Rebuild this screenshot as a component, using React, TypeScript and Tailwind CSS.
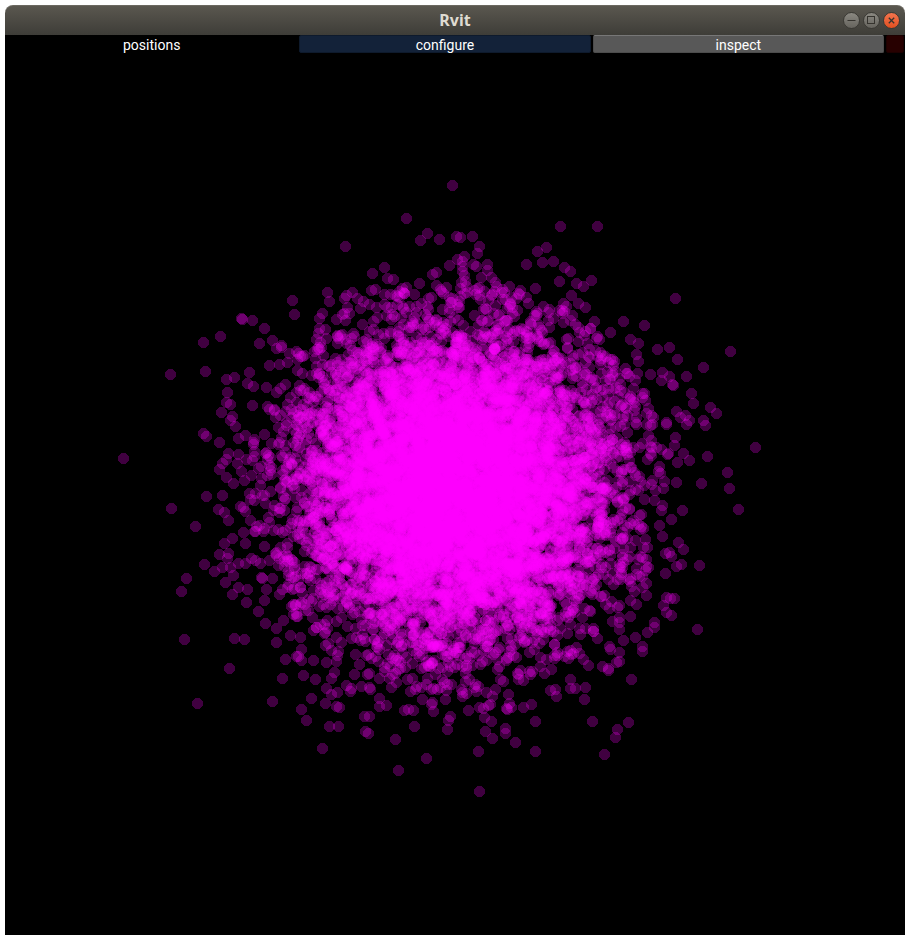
import type { ReactNode } from "react";

type Point = [number, number];

const CENTER_X = 457;
const CENTER_Y = 487;
const SPREAD = 81;
const SAMPLES = 10500;
const CORE_RADIUS = 208;

// Sparse points on the rim of the cloud, as "x,y" pairs.
const RIM = `
346,247 328,293 330,302 293,301 295,315 242,319 243,320 253,321 265,329 260,344 221,337 204,343 206,372 171,375
273,341 277,349 282,346 282,348 250,373 235,378 227,380 248,384 254,387 267,388 228,393 227,403 231,405 222,413
233,417 231,421 253,406 268,407 236,427 270,366 280,365 288,363 290,354 297,352 323,314 320,319 320,329 319,334
319,348 320,350 337,320 345,299 347,296 353,293 358,299 348,308 345,314 350,314
453,186 407,219 428,234 421,241 440,240 457,237 461,238 473,237 480,247 478,254 465,257 458,260 463,262 450,266
463,267 474,265 477,267 488,265 488,271 463,272 465,276 437,273 433,275 482,278 492,278 385,268 373,274 388,279
394,280 372,291 376,290 403,289 400,292 405,294 415,295 441,290 442,292 444,294 461,289 467,287 475,291 485,292
495,292 497,287 503,290 512,298 519,294 536,289 561,227 538,252 547,248 527,265 543,263 554,262 565,268 571,272
560,282 577,284 584,287 592,281 572,296 564,304 567,307 579,304 586,308 595,322 573,316 571,321 576,325 544,307
550,310 585,336 364,302 370,305
598,227 676,299 731,352 624,322 645,326 611,333 598,337 597,339 631,340 639,344 637,355 639,362 638,374 658,350
670,348 678,360 704,368 651,375 663,373 662,381 670,377 673,385 674,386 687,377 692,394 694,404 711,408 717,414
677,412 681,418 686,416 690,421 687,425 704,421 706,426 667,423 667,425 647,414 652,416 654,418 645,394 643,398
646,401 631,400 636,407 619,397 615,402 634,389 621,385 620,379 609,389 610,380 611,360 637,418
124,459 204,434 207,437 220,443 172,509 207,497 223,496 196,527 219,510 225,513 229,521 229,454 227,460 223,464
220,470 239,455 238,464 247,460 242,472 227,478 234,484 245,481 250,494 239,439 246,436 254,443 241,507 244,508
246,512 251,521 244,533 246,544 233,539 225,544 229,554 220,555 228,559 205,565 215,572 223,568 231,568 234,576
239,564 246,564 252,559 256,561 261,564 226,583 239,588 233,595 248,590 247,603 259,612 266,624 187,579 182,592
185,640 235,639 245,640 277,629 277,643 284,621 263,579 262,578 265,601 267,590 291,636 301,638 297,614 302,650
273,579
756,448 728,473 730,489 739,510 708,457 702,484 677,483 676,438 675,446 684,454 690,461 678,463 669,454 668,455
662,450 651,447 652,448 660,467 659,472 661,474 665,482 656,491 683,511 672,520 662,511 660,526 679,543 684,550
682,565 677,567 700,566 670,553 666,554 672,557 666,574 663,537 647,567 649,568 647,584 643,588 640,577 647,596
637,605 667,598 671,599 675,599 664,606 667,613 672,616 698,630 655,623 655,628 648,633 636,638 624,641 643,647
643,652 598,639 610,647 611,650 620,653 620,630 620,623 620,618 631,617
230,669 198,704 286,660 283,679 273,702 302,710 307,721 323,749 304,676 316,680 314,661 312,699 297,657 299,657
302,661 327,663 337,662 335,673 332,679 327,689 332,695 338,693 326,704 337,707 340,708 330,727 339,727 365,717
370,717 366,732 369,734 396,740 399,771 380,699 380,707 387,706 392,688 380,679 390,679 371,690 370,688 362,687
352,689 351,692 347,686 405,711 409,710 414,711 411,692 415,727 368,675 355,675 408,680 413,679
427,759 480,792 479,752 434,712 423,700 433,703 432,705 434,689 422,688 446,700 463,697 469,711 452,685 448,730
449,721 451,717 475,688 476,685 477,692 487,693 493,697 480,708 484,709 489,706 491,705 485,718 492,722 486,732
493,739 506,729 506,734 516,743 536,722 536,752 508,710 507,709 512,708 510,704 509,695 524,708 532,705 519,680
501,680 551,691 556,690 557,697 533,672 571,680 571,689 576,689 586,688 585,700 593,722 629,723 618,730 616,738
605,755 632,680 589,666 584,660 603,667 609,671 609,669 617,663 620,662
`;

const rimPoints: Point[] = RIM.trim()
  .split(/\s+/)
  .map((pair) => {
    const [x, y] = pair.split(",").map(Number);
    return [x, y];
  });

// Seeded generator, so that the cloud is the same on every load.
function makeRandom(seed: number) {
  let state = seed;
  return () => {
    state = (state + 0x6d2b79f5) | 0;
    let t = Math.imul(state ^ (state >>> 15), 1 | state);
    t = (t + Math.imul(t ^ (t >>> 7), 61 | t)) ^ t;
    return ((t ^ (t >>> 14)) >>> 0) / 4294967296;
  };
}

function sampleCore(): Point[] {
  const random = makeRandom(7);
  const points: Point[] = [];
  for (let i = 0; i < SAMPLES; i++) {
    const radius = SPREAD * Math.sqrt(-2 * Math.log(1 - random()));
    const angle = 2 * Math.PI * random();
    if (radius < CORE_RADIUS) {
      points.push([
        Math.round(CENTER_X + radius * Math.cos(angle)),
        Math.round(CENTER_Y + radius * Math.sin(angle)),
      ]);
    }
  }
  return points;
}

const points: Point[] = [...sampleCore(), ...rimPoints];

function Scatter() {
  return (
    <svg
      viewBox="5 53 900 882"
      className="block w-full bg-black"
      role="img"
      aria-label="positions"
    >
      <g fill="#ff00ff" fillOpacity={0.25} shapeRendering="crispEdges">
        {points.map(([x, y], i) => (
          <circle key={i} cx={x - 0.5} cy={y - 0.5} r={5.6} />
        ))}
      </g>
    </svg>
  );
}

function WindowButton({
  label,
  close = false,
  children,
}: {
  label: string;
  close?: boolean;
  children: ReactNode;
}) {
  const tone = close
    ? "bg-linear-to-b from-[#f3744d] to-[#e2501f]"
    : "bg-linear-to-b from-[#8a8881] to-[#66645e]";
  return (
    <button
      type="button"
      aria-label={label}
      className={`flex size-[17px] items-center justify-center rounded-full border border-[#3a3934] ${tone}`}
    >
      <svg
        viewBox="0 0 15 15"
        className="size-[15px] shrink-0"
        fill="none"
        stroke="#35332e"
        strokeWidth="1"
      >
        {children}
      </svg>
    </button>
  );
}

function TitleBar() {
  return (
    <header className="grid h-[30px] grid-cols-[1fr_auto_1fr] items-center rounded-t-lg border-t border-[#6b6860] bg-linear-to-b from-[#5a574f] to-[#3e3d38]">
      <h1 className="col-start-2 pb-[2px] font-['Noto_Sans',sans-serif] text-base leading-5 font-bold text-[#dfdbd2]">
        Rvit
      </h1>
      <div className="flex justify-end gap-[3px] pr-[5px]">
        <WindowButton label="Minimize">
          <path d="M3.5 7.5h8" />
        </WindowButton>
        <WindowButton label="Maximize">
          <rect x="3.5" y="3.5" width="7" height="7" />
        </WindowButton>
        <WindowButton label="Close" close>
          <path d="M4.8 4.8l5.4 5.4M10.2 4.8l-5.4 5.4" strokeWidth="1.3" />
        </WindowButton>
      </div>
    </header>
  );
}

function TabBar() {
  const tab = "h-[18px] flex-1 rounded-xs border pt-[2px] text-center text-sm leading-3";
  return (
    <nav className="flex gap-[2px] bg-black px-px font-[Roboto,sans-serif] text-white">
      <button type="button" className={`${tab} border-black bg-black`}>
        positions
      </button>
      <button type="button" className={`${tab} border-[#0e1a2c] bg-[#132239]`}>
        configure
      </button>
      <button type="button" className={`${tab} border-[#4c4c4c] border-t-[#777777] bg-[#585858]`}>
        inspect
      </button>
      <button
        type="button"
        aria-label="Close panel"
        className="size-[18px] rounded-xs border border-[#1c0000] bg-[#270000]"
      />
    </nav>
  );
}

export default function App() {
  return (
    <div className="bg-white pt-[5px] pr-[9px] pb-[9px] pl-[5px]">
      <main>
        <TitleBar />
        <TabBar />
        <Scatter />
      </main>
    </div>
  );
}
